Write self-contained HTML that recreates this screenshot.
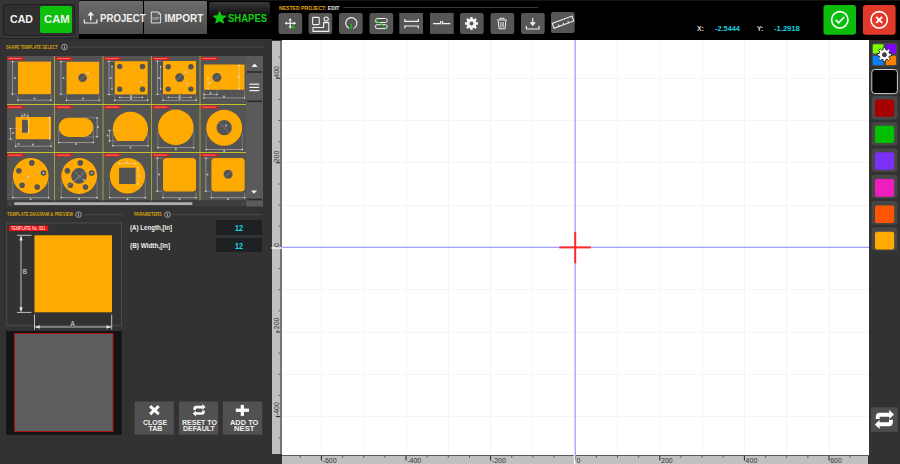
<!DOCTYPE html>
<html><head><meta charset="utf-8">
<style>
*{margin:0;padding:0;box-sizing:border-box}
html,body{width:900px;height:464px;overflow:hidden;background:#323232;font-family:"Liberation Sans",sans-serif}
.a{position:absolute}
.t{position:absolute;white-space:nowrap;font-weight:bold;transform-origin:0 0}
svg{position:absolute;overflow:visible}
</style></head><body>
<!-- ===== top left header ===== -->
<div class="a" style="left:0;top:0;width:79px;height:39px;background:#353535"></div>
<div class="a" style="left:79px;top:0;width:821px;height:40px;background:#000"></div>
<div class="a" style="left:79px;top:0;width:821px;height:1px;background:#151515"></div>
<div class="a" style="left:2.5px;top:3.5px;width:72.5px;height:32.5px;background:#2f2f2f;border:1.5px solid #1f1f1f;border-radius:3px;box-shadow:0 1px 0 #3c3c3c"></div>
<div class="a" style="left:0;top:38px;width:79px;height:1px;background:#232323"></div>
<div class="a" style="left:40px;top:6px;width:32px;height:27px;background:#0cc00c;border-radius:2px"></div>
<div class="t" id="cad" style="left:10px;top:13.8px;font-size:10px;color:#f2f2f2;transform:scaleX(1.06)">CAD</div>
<div class="t" id="cam" style="left:43.8px;top:13.8px;font-size:10px;color:#f2f2f2;transform:scaleX(1.13)">CAM</div>

<div class="a" style="left:79px;top:1px;width:64px;height:33px;background:linear-gradient(#6c6c6c,#4c4c4c);border-radius:1px 1px 0 0"></div>
<div class="a" style="left:144px;top:1px;width:63px;height:33px;background:linear-gradient(#6c6c6c,#4c4c4c);border-radius:1px 1px 0 0"></div>
<div class="a" style="left:209px;top:2px;width:61px;height:32px;background:linear-gradient(#383838,#000 60%);border-radius:2px 2px 0 0"></div>
<div class="t" id="proj" style="left:100px;top:13.3px;font-size:10px;color:#f0f0f0;transform:scaleX(0.965)">PROJECT</div>
<div class="t" id="imp" style="left:164.5px;top:13.3px;font-size:10px;color:#f0f0f0">IMPORT</div>
<div class="t" id="shp" style="left:227.5px;top:13.3px;font-size:10px;color:#10d010;transform:scaleX(0.95)">SHAPES</div>

<!-- ===== left panel ===== -->
<div class="a" style="left:0;top:39px;width:272px;height:425px;background:#323232"></div>


<!-- ===== left panel content ===== -->
<svg style="left:0;top:0" width="900" height="464" viewBox="0 0 900 464" font-family="Liberation Sans" font-weight="bold">
 <line x1="69.5" y1="47" x2="263" y2="47" stroke="#4a4a4a" stroke-width="1"/>
 <circle cx="64.5" cy="47" r="2.8" fill="none" stroke="#bdbdbd" stroke-width="0.8"/>
 <line x1="64.5" y1="45.5" x2="64.5" y2="48.7" stroke="#bdbdbd" stroke-width="0.8"/>
 <!-- grid -->
 <rect x="7" y="56" width="239" height="144.5" fill="#545454"/>
 <rect x="246" y="56" width="17" height="150.5" fill="#5a5a5a"/>
 <rect x="7" y="200.5" width="239" height="6" fill="#3d3d3d"/>
 <rect x="14" y="202.3" width="178.5" height="2.8" rx="1.4" fill="#b0b0b0"/>
 <path d="M10.5 202.2 L8.8 203.6 L10.5 205" fill="none" stroke="#777" stroke-width="0.6"/>
 <path d="M241.8 202.2 L243.5 203.6 L241.8 205" fill="none" stroke="#777" stroke-width="0.6"/>
 <g stroke="#a3a036" stroke-width="1">
  <line x1="54.5" y1="56" x2="54.5" y2="200.5"/>
  <line x1="103" y1="56" x2="103" y2="200.5"/>
  <line x1="151.5" y1="56" x2="151.5" y2="200.5"/>
  <line x1="200" y1="56" x2="200" y2="200.5"/>
 </g>
 <g stroke="#c2be2e" stroke-width="1">
  <line x1="7" y1="104.5" x2="246" y2="104.5"/>
  <line x1="7" y1="152.5" x2="246" y2="152.5"/>
 </g>
 <!-- scroll column -->
 <path d="M251.5 67 L254.6 63.6 L257.7 67 Z" fill="#f0f0f0"/>
 <rect x="247" y="71.2" width="15" height="1.6" fill="#2a2a2a"/>
 <g stroke="#f4f4f4" stroke-width="1.2"><line x1="249.4" y1="84.2" x2="259.2" y2="84.2"/><line x1="249.4" y1="87.4" x2="259.2" y2="87.4"/><line x1="249.4" y1="90.6" x2="259.2" y2="90.6"/></g>
 <rect x="247" y="100.5" width="15" height="1.6" fill="#2a2a2a"/>
 <path d="M250.9 190.4 L254 193.8 L257.1 190.4 Z" fill="#f0f0f0"/>
 <rect x="247" y="198.7" width="15" height="1.6" fill="#2a2a2a"/>
 <!-- red labels -->
 <g fill="#f41212"><rect x="7.0" y="57.3" width="16.8" height="2.6"/><rect x="55.5" y="57.3" width="16.8" height="2.6"/><rect x="104.0" y="57.3" width="16.8" height="2.6"/><rect x="152.5" y="57.3" width="16.8" height="2.6"/><rect x="201.0" y="57.3" width="16.8" height="2.6"/><rect x="7.0" y="105.8" width="16.8" height="2.6"/><rect x="55.5" y="105.8" width="16.8" height="2.6"/><rect x="104.0" y="105.8" width="16.8" height="2.6"/><rect x="152.5" y="105.8" width="16.8" height="2.6"/><rect x="201.0" y="105.8" width="16.8" height="2.6"/><rect x="7.0" y="153.8" width="16.8" height="2.6"/><rect x="55.5" y="153.8" width="16.8" height="2.6"/><rect x="104.0" y="153.8" width="16.8" height="2.6"/><rect x="152.5" y="153.8" width="16.8" height="2.6"/><rect x="201.0" y="153.8" width="16.8" height="2.6"/></g><g fill="#ffa8a8"><rect x="8.5" y="58.3" width="13" height="0.6"/><rect x="57.0" y="58.3" width="13" height="0.6"/><rect x="105.5" y="58.3" width="13" height="0.6"/><rect x="154.0" y="58.3" width="13" height="0.6"/><rect x="202.5" y="58.3" width="13" height="0.6"/><rect x="8.5" y="106.8" width="13" height="0.6"/><rect x="57.0" y="106.8" width="13" height="0.6"/><rect x="105.5" y="106.8" width="13" height="0.6"/><rect x="154.0" y="106.8" width="13" height="0.6"/><rect x="202.5" y="106.8" width="13" height="0.6"/><rect x="8.5" y="154.8" width="13" height="0.6"/><rect x="57.0" y="154.8" width="13" height="0.6"/><rect x="105.5" y="154.8" width="13" height="0.6"/><rect x="154.0" y="154.8" width="13" height="0.6"/><rect x="202.5" y="154.8" width="13" height="0.6"/></g>
 <!-- shapes -->
 <g fill="#ffaa00">
  <rect x="18" y="61.6" width="33" height="32.6"/>
  <path fill-rule="evenodd" d="M66.5 61.7 H99.2 V94.2 H66.5 Z M78.3 77.7 a4.3 4.3 0 1 0 8.6 0 a4.3 4.3 0 1 0 -8.6 0 Z"/>
  <path fill-rule="evenodd" d="M114.8 61.3 H147.7 V94.5 H114.8 Z M117 66.5 a2.7 2.7 0 1 0 5.4 0 a2.7 2.7 0 1 0 -5.4 0 Z M139.8 66.5 a2.7 2.7 0 1 0 5.4 0 a2.7 2.7 0 1 0 -5.4 0 Z M117 89.2 a2.7 2.7 0 1 0 5.4 0 a2.7 2.7 0 1 0 -5.4 0 Z M139.8 89.2 a2.7 2.7 0 1 0 5.4 0 a2.7 2.7 0 1 0 -5.4 0 Z"/>
  <path fill-rule="evenodd" d="M163 61.1 H196.1 V94.3 H163 Z M165.5 66.7 a2.7 2.7 0 1 0 5.4 0 a2.7 2.7 0 1 0 -5.4 0 Z M188.2 66.7 a2.7 2.7 0 1 0 5.4 0 a2.7 2.7 0 1 0 -5.4 0 Z M165.5 89.1 a2.7 2.7 0 1 0 5.4 0 a2.7 2.7 0 1 0 -5.4 0 Z M188.2 89.1 a2.7 2.7 0 1 0 5.4 0 a2.7 2.7 0 1 0 -5.4 0 Z M175.2 77.6 a4.4 4.4 0 1 0 8.8 0 a4.4 4.4 0 1 0 -8.8 0 Z"/>
  <path fill-rule="evenodd" d="M203.9 64.4 H244.5 V89.7 H203.9 Z M212.4 77.4 a4.5 4.5 0 1 0 9 0 a4.5 4.5 0 1 0 -9 0 Z"/>
  <path fill-rule="evenodd" d="M15.6 117.1 H51.1 V139.3 H15.6 Z M22 119.8 H27.9 V132.8 H22 Z"/>
  <rect x="58.7" y="117.7" width="34.7" height="19.2" rx="9.6"/>
  <path d="M117.3 141 A17.6 17.6 0 1 1 143.5 141 Z"/>
  <circle cx="175.8" cy="127.4" r="17.8"/>
  <path fill-rule="evenodd" d="M206.2 127.8 a18 18 0 1 0 36 0 a18 18 0 1 0 -36 0 Z M216.6 127.7 a7.6 7.6 0 1 0 15.2 0 a7.6 7.6 0 1 0 -15.2 0 Z"/>
  <path fill-rule="evenodd" d="M12.8 175.9 a17.9 17.9 0 1 0 35.8 0 a17.9 17.9 0 1 0 -35.8 0 Z M29 162.9 a2.8 2.8 0 1 0 5.6 0 a2.8 2.8 0 1 0 -5.6 0 Z M16.1 170.7 a2.8 2.8 0 1 0 5.6 0 a2.8 2.8 0 1 0 -5.6 0 Z M40.7 173 a2.8 2.8 0 1 0 5.6 0 a2.8 2.8 0 1 0 -5.6 0 Z M19.3 185.2 a2.8 2.8 0 1 0 5.6 0 a2.8 2.8 0 1 0 -5.6 0 Z M34.4 187.1 a2.8 2.8 0 1 0 5.6 0 a2.8 2.8 0 1 0 -5.6 0 Z"/>
  <path fill-rule="evenodd" d="M61.3 176 a17.9 17.9 0 1 0 35.8 0 a17.9 17.9 0 1 0 -35.8 0 Z M71.2 175.9 a7.8 7.8 0 1 0 15.6 0 a7.8 7.8 0 1 0 -15.6 0 Z M77.5 162.9 a2.8 2.8 0 1 0 5.6 0 a2.8 2.8 0 1 0 -5.6 0 Z M64.6 170.7 a2.8 2.8 0 1 0 5.6 0 a2.8 2.8 0 1 0 -5.6 0 Z M88.9 173 a2.8 2.8 0 1 0 5.6 0 a2.8 2.8 0 1 0 -5.6 0 Z M67.6 185.2 a2.8 2.8 0 1 0 5.6 0 a2.8 2.8 0 1 0 -5.6 0 Z M82.7 187.1 a2.8 2.8 0 1 0 5.6 0 a2.8 2.8 0 1 0 -5.6 0 Z"/>
  <path fill-rule="evenodd" d="M109.7 175.7 a17.8 17.8 0 1 0 35.6 0 a17.8 17.8 0 1 0 -35.6 0 Z M119.1 167.7 H135.6 V183.9 H119.1 Z"/>
  <rect x="163" y="158" width="33" height="33.4" rx="3.5"/>
  <path fill-rule="evenodd" d="M214.9 158 H241.2 a3.5 3.5 0 0 1 3.5 3.5 V187.9 a3.5 3.5 0 0 1 -3.5 3.5 H214.9 a3.5 3.5 0 0 1 -3.5 -3.5 V161.5 a3.5 3.5 0 0 1 3.5 -3.5 Z M223.6 174.3 a4.5 4.5 0 1 0 9 0 a4.5 4.5 0 1 0 -9 0 Z"/>
 </g>
 <!-- dimension lines (thumbnails) -->
 <g stroke="#f0f0f0" stroke-width="0.45" fill="none" opacity="0.9">
 <path d="M12.5 61.7 L12.5 94.1 M18 100.2 L51 100.2 M61 61.7 L61 94.2 M66.5 100.3 L99.2 100.3 M109 61.3 L109 94.5 M112 66.5 L112 89.2 M114.8 100.3 L147.7 100.3 M119.7 97.4 L142.5 97.4 M157.5 61.1 L157.5 94.3 M160.5 66.7 L160.5 89.1 M163 100.3 L196.1 100.3 M168.2 97.4 L190.9 97.4 M239.1 65.5 L239.1 88.8 M208 78 L208 88.5 M204 97.9 L244.5 97.9 M204 94.5 L217 94.5 M15.6 146.2 L51.1 146.2 M22 116 L27.9 116 M49.5 117.5 L49.5 139 M28.5 120 L28.5 132.5 M10.5 128.5 L10.5 139 M97.1 117.9 L97.1 136.7 M58.7 142.5 L93.4 142.5 M112.8 145.7 L148 145.7 M109.5 130.5 L109.5 141 M157.9 147.6 L193.7 147.6 M206.2 149.5 L242.3 149.5 M12.8 197.6 L48.6 197.6 M61.3 197.6 L97.1 197.6 M109.7 197.6 L145.3 197.6 M119.1 163.5 L135.6 163.5 M138.2 167.7 L138.2 183.9 M157.3 158.2 L157.3 191.2 M163 197.6 L196 197.6 M205.9 158.2 L205.9 191.2 M211.4 197.6 L244.7 197.6 "/>
 <path d="M10.5 61.7 L17 61.7 M10.5 94.1 L17 94.1 M18 95.5 L18 101.2 M51 95.5 L51 101.2 M59 61.7 L65.5 61.7 M59 94.2 L65.5 94.2 M66.5 95.5 L66.5 101.3 M99.2 95.5 L99.2 101.3 M82.6 68 L82.6 71 M82.6 84.5 L82.6 87.5 M73 77.7 L76 77.7 M89.5 77.7 L92.5 77.7 M80 80.5 L85.5 75 M86 74.5 L89 71.5 M107 61.3 L114 61.3 M107 94.5 L114 94.5 M114.8 95.5 L114.8 101.3 M147.7 95.5 L147.7 101.3 M155.5 61.1 L162 61.1 M155.5 94.3 L162 94.3 M163 95.5 L163 101.3 M196.1 95.5 L196.1 101.3 M176.5 80.5 L182.5 74.5 M183 74 L186 71 M179.6 68 L179.6 71 M179.6 84.5 L179.6 87.5 M204 91 L204 98.9 M244.5 91 L244.5 98.9 M214 80.5 L220 74.5 M220 74.5 L223 70.5 M217.1 89.7 L217.1 95.5 M15.6 140.5 L15.6 147.2 M51.1 140.5 L51.1 147.2 M8.5 128.5 L22 128.5 M8.5 139.3 L14 139.3 M22 112.5 L22 119 M27.9 112.5 L27.9 119 M84 117.8 L98.5 117.8 M84 136.9 L98.5 136.9 M58.7 128 L58.7 143.5 M93.4 128 L93.4 143.5 M112.8 134 L112.8 146.7 M148 134 L148 146.7 M107.5 130.5 L120 130.5 M107.5 141 L117 141 M124 128.3 L128 128.3 M133 128.3 L137 128.3 M130.5 121 L130.5 125 M130.5 131 L130.5 135 M157.9 131 L157.9 148.6 M193.7 131 L193.7 148.6 M206.2 133 L206.2 150.5 M242.3 133 L242.3 150.5 M219.2 122.5 L229.2 132.8 M12.8 181 L12.8 198.6 M48.6 181 L48.6 198.6 M20.5 181.5 L42.5 170.5 M61.3 181 L61.3 198.6 M97.1 181 L97.1 198.6 M73.7 170.3 L84.6 181.5 M84.6 170.3 L73.7 181.5 M68 186 L91.5 168 M109.7 181 L109.7 198.6 M145.3 181 L145.3 198.6 M155.3 158.2 L163 158.2 M155.3 191.2 L163 191.2 M163 192.5 L163 198.6 M196 192.5 L196 198.6 M203.9 158.2 L211.5 158.2 M203.9 191.2 L211.5 191.2 M211.4 192.5 L211.4 198.6 M244.7 192.5 L244.7 198.6 M228.1 167 L228.1 170 M228.1 178.5 L228.1 181.5 M218 174.3 L221 174.3 M235 174.3 L238 174.3 M225.5 177 L231 171.5 " stroke="#cfcfcf" stroke-width="0.35"/>
 </g><g fill="#f4f4f4">
 <rect x="11.9" y="61.1" width="1.2" height="1.2"/><rect x="11.9" y="93.5" width="1.2" height="1.2"/>
 <rect x="17.4" y="99.6" width="1.2" height="1.2"/><rect x="50.4" y="99.6" width="1.2" height="1.2"/>
 <rect x="60.4" y="61.1" width="1.2" height="1.2"/><rect x="60.4" y="93.6" width="1.2" height="1.2"/>
 <rect x="65.9" y="99.7" width="1.2" height="1.2"/><rect x="98.6" y="99.7" width="1.2" height="1.2"/>
 <rect x="108.4" y="60.7" width="1.2" height="1.2"/><rect x="108.4" y="93.9" width="1.2" height="1.2"/>
 <rect x="111.4" y="65.9" width="1.2" height="1.2"/><rect x="111.4" y="88.6" width="1.2" height="1.2"/>
 <rect x="114.2" y="99.7" width="1.2" height="1.2"/><rect x="147.1" y="99.7" width="1.2" height="1.2"/>
 <rect x="119.1" y="96.8" width="1.2" height="1.2"/><rect x="141.9" y="96.8" width="1.2" height="1.2"/>
 <rect x="156.9" y="60.5" width="1.2" height="1.2"/><rect x="156.9" y="93.7" width="1.2" height="1.2"/>
 <rect x="159.9" y="66.1" width="1.2" height="1.2"/><rect x="159.9" y="88.5" width="1.2" height="1.2"/>
 <rect x="162.4" y="99.7" width="1.2" height="1.2"/><rect x="195.5" y="99.7" width="1.2" height="1.2"/>
 <rect x="167.6" y="96.8" width="1.2" height="1.2"/><rect x="190.3" y="96.8" width="1.2" height="1.2"/>
 <rect x="238.5" y="64.9" width="1.2" height="1.2"/><rect x="238.5" y="88.2" width="1.2" height="1.2"/>
 <rect x="207.4" y="77.4" width="1.2" height="1.2"/><rect x="207.4" y="87.9" width="1.2" height="1.2"/>
 <rect x="203.4" y="97.3" width="1.2" height="1.2"/><rect x="243.9" y="97.3" width="1.2" height="1.2"/>
 <rect x="203.4" y="93.9" width="1.2" height="1.2"/><rect x="216.4" y="93.9" width="1.2" height="1.2"/>
 <rect x="15.0" y="145.6" width="1.2" height="1.2"/><rect x="50.5" y="145.6" width="1.2" height="1.2"/>
 <rect x="21.4" y="115.4" width="1.2" height="1.2"/><rect x="27.3" y="115.4" width="1.2" height="1.2"/>
 <rect x="48.9" y="116.9" width="1.2" height="1.2"/><rect x="48.9" y="138.4" width="1.2" height="1.2"/>
 <rect x="27.9" y="119.4" width="1.2" height="1.2"/><rect x="27.9" y="131.9" width="1.2" height="1.2"/>
 <rect x="9.9" y="127.9" width="1.2" height="1.2"/><rect x="9.9" y="138.4" width="1.2" height="1.2"/>
 <rect x="96.5" y="117.3" width="1.2" height="1.2"/><rect x="96.5" y="136.1" width="1.2" height="1.2"/>
 <rect x="58.1" y="141.9" width="1.2" height="1.2"/><rect x="92.8" y="141.9" width="1.2" height="1.2"/>
 <rect x="112.2" y="145.1" width="1.2" height="1.2"/><rect x="147.4" y="145.1" width="1.2" height="1.2"/>
 <rect x="108.9" y="129.9" width="1.2" height="1.2"/><rect x="108.9" y="140.4" width="1.2" height="1.2"/>
 <rect x="157.3" y="147.0" width="1.2" height="1.2"/><rect x="193.1" y="147.0" width="1.2" height="1.2"/>
 <rect x="205.6" y="148.9" width="1.2" height="1.2"/><rect x="241.7" y="148.9" width="1.2" height="1.2"/>
 <rect x="12.2" y="197.0" width="1.2" height="1.2"/><rect x="48.0" y="197.0" width="1.2" height="1.2"/>
 <rect x="60.7" y="197.0" width="1.2" height="1.2"/><rect x="96.5" y="197.0" width="1.2" height="1.2"/>
 <rect x="109.1" y="197.0" width="1.2" height="1.2"/><rect x="144.7" y="197.0" width="1.2" height="1.2"/>
 <rect x="118.5" y="162.9" width="1.2" height="1.2"/><rect x="135.0" y="162.9" width="1.2" height="1.2"/>
 <rect x="137.6" y="167.1" width="1.2" height="1.2"/><rect x="137.6" y="183.3" width="1.2" height="1.2"/>
 <rect x="156.7" y="157.6" width="1.2" height="1.2"/><rect x="156.7" y="190.6" width="1.2" height="1.2"/>
 <rect x="162.4" y="197.0" width="1.2" height="1.2"/><rect x="195.4" y="197.0" width="1.2" height="1.2"/>
 <rect x="205.3" y="157.6" width="1.2" height="1.2"/><rect x="205.3" y="190.6" width="1.2" height="1.2"/>
 <rect x="210.8" y="197.0" width="1.2" height="1.2"/><rect x="244.1" y="197.0" width="1.2" height="1.2"/>
 </g><g fill="#dcdcdc">
 <rect x="14.2" y="77.1" width="1.6" height="1.8" opacity="0.8"/>
 <rect x="33.7" y="97.6" width="1.6" height="1.8" opacity="0.8"/>
 <rect x="62.7" y="77.1" width="1.6" height="1.8" opacity="0.8"/>
 <rect x="82.2" y="97.6" width="1.6" height="1.8" opacity="0.8"/>
 <rect x="87.2" y="72.1" width="1.6" height="1.8" opacity="0.8"/>
 <rect x="109.7" y="77.1" width="1.6" height="1.8" opacity="0.8"/>
 <rect x="130.2" y="95.1" width="1.6" height="1.8" opacity="0.8"/>
 <rect x="130.2" y="97.9" width="1.6" height="1.8" opacity="0.8"/>
 <rect x="140.2" y="81.1" width="1.6" height="1.8" opacity="0.8"/>
 <rect x="158.2" y="77.1" width="1.6" height="1.8" opacity="0.8"/>
 <rect x="178.8" y="95.1" width="1.6" height="1.8" opacity="0.8"/>
 <rect x="178.8" y="97.9" width="1.6" height="1.8" opacity="0.8"/>
 <rect x="185.2" y="71.1" width="1.6" height="1.8" opacity="0.8"/>
 <rect x="186.2" y="83.1" width="1.6" height="1.8" opacity="0.8"/>
 <rect x="238.3" y="76.1" width="1.6" height="1.8" opacity="0.8"/>
 <rect x="209.2" y="82.1" width="1.6" height="1.8" opacity="0.8"/>
 <rect x="223.2" y="95.6" width="1.6" height="1.8" opacity="0.8"/>
 <rect x="209.7" y="92.1" width="1.6" height="1.8" opacity="0.8"/>
 <rect x="32.2" y="143.7" width="1.6" height="1.8" opacity="0.8"/>
 <rect x="23.7" y="113.6" width="1.6" height="1.8" opacity="0.8"/>
 <rect x="12.2" y="132.1" width="1.6" height="1.8" opacity="0.8"/>
 <rect x="17.7" y="143.1" width="1.6" height="1.8" opacity="0.8"/>
 <rect x="97.2" y="126.1" width="1.6" height="1.8" opacity="0.8"/>
 <rect x="75.2" y="143.1" width="1.6" height="1.8" opacity="0.8"/>
 <rect x="129.7" y="146.6" width="1.6" height="1.8" opacity="0.8"/>
 <rect x="106.7" y="134.6" width="1.6" height="1.8" opacity="0.8"/>
 <rect x="175.0" y="148.4" width="1.6" height="1.8" opacity="0.8"/>
 <rect x="223.4" y="150.1" width="1.6" height="1.8" opacity="0.8"/>
 <rect x="225.2" y="124.6" width="1.6" height="1.8" opacity="0.8"/>
 <rect x="29.9" y="198.3" width="1.6" height="1.8" opacity="0.8"/>
 <rect x="27.2" y="176.1" width="1.6" height="1.8" opacity="0.8"/>
 <rect x="42.7" y="172.1" width="1.6" height="1.8" opacity="0.8"/>
 <rect x="78.4" y="198.3" width="1.6" height="1.8" opacity="0.8"/>
 <rect x="83.2" y="179.1" width="1.6" height="1.8" opacity="0.8"/>
 <rect x="90.9" y="172.1" width="1.6" height="1.8" opacity="0.8"/>
 <rect x="126.7" y="198.3" width="1.6" height="1.8" opacity="0.8"/>
 <rect x="126.7" y="161.1" width="1.6" height="1.8" opacity="0.8"/>
 <rect x="138.7" y="175.1" width="1.6" height="1.8" opacity="0.8"/>
 <rect x="158.2" y="173.6" width="1.6" height="1.8" opacity="0.8"/>
 <rect x="178.7" y="198.3" width="1.6" height="1.8" opacity="0.8"/>
 <rect x="206.7" y="173.6" width="1.6" height="1.8" opacity="0.8"/>
 <rect x="227.2" y="198.3" width="1.6" height="1.8" opacity="0.8"/>
 </g>
 <!-- section headers -->
 <line x1="84" y1="214.6" x2="122" y2="214.6" stroke="#4a4a4a" stroke-width="1"/>
 <circle cx="78.5" cy="214.6" r="2.8" fill="none" stroke="#bdbdbd" stroke-width="0.8"/>
 <line x1="78.5" y1="213.1" x2="78.5" y2="216.3" stroke="#bdbdbd" stroke-width="0.8"/>
 <line x1="172.5" y1="214.6" x2="262" y2="214.6" stroke="#4a4a4a" stroke-width="1"/>
 <circle cx="167.5" cy="214.6" r="2.8" fill="none" stroke="#bdbdbd" stroke-width="0.8"/>
 <line x1="167.5" y1="213.1" x2="167.5" y2="216.3" stroke="#bdbdbd" stroke-width="0.8"/>

 <!-- preview diagram -->
 <rect x="6.7" y="222.9" width="114.8" height="102.8" fill="none" stroke="#4b4b4b" stroke-width="1"/>
 <rect x="9" y="225.5" width="39.2" height="5.5" fill="#ee1111"/>
 <rect x="34.5" y="235.3" width="77.5" height="77" fill="#ffaa00"/>
 <g stroke="#e6e6e6" stroke-width="0.8" fill="none">
  <path d="M21 236.5 V311.2 M17 235.3 H31.5 M17 312.4 H31.5"/>
  <path d="M35.5 327 H111 M34.5 314.5 V329.6 M111.7 314.5 V329.6"/>
 </g>
 <g fill="#e6e6e6">
  <path d="M21 235.6 L19.3 240.5 L22.7 240.5 Z M21 312.2 L19.3 307.3 L22.7 307.3 Z"/>
  <path d="M34.8 327 L39.7 325.3 L39.7 328.7 Z M111.4 327 L106.5 325.3 L106.5 328.7 Z"/>
 </g>
 <!-- preview black -->
 <rect x="6.2" y="331" width="115.4" height="103.8" fill="#141414"/>
 <rect x="14.5" y="333.5" width="98.5" height="98" fill="#5d5d5d" stroke="#a81414" stroke-width="1"/>

 <!-- buttons -->
 <rect x="134.6" y="401.5" width="39.2" height="33.1" fill="#515151"/>
 <rect x="179" y="401.5" width="39.2" height="33.1" fill="#515151"/>
 <rect x="222.8" y="401.5" width="39.4" height="33.1" fill="#515151"/>
</svg>


<!-- ===== left panel texts ===== -->
<div class="t" id="sts" style="left:6px;top:43.5px;font-size:5.5px;color:#d6a10c;transform:scaleX(0.708)">SHAPE TEMPLATE SELECT</div>
<div class="t" id="tdp" style="left:6.6px;top:211px;font-size:5.5px;color:#d6a10c;transform:scaleX(0.74)">TEMPLATE DIAGRAM &amp; PREVIEW</div>
<div class="t" id="par" style="left:133.7px;top:211px;font-size:5.5px;color:#d6a10c;transform:scaleX(0.725)">PARAMETERS</div>
<div class="t" id="tno" style="left:11px;top:226px;font-size:4.5px;color:#fff;font-weight:normal;transform:scaleX(0.85)">TEMPLATE No. 001</div>
<div class="t" id="lenA" style="left:130px;top:224px;font-size:7px;color:#f0f0f0;transform:scaleX(0.88)">(A) Length,[in]</div>
<div class="t" id="widB" style="left:130px;top:242px;font-size:7px;color:#f0f0f0;transform:scaleX(0.915)">(B) Width,[in]</div>
<div class="a" style="left:216.3px;top:220.3px;width:45.7px;height:14.4px;background:#1e2123"></div>
<div class="a" style="left:216.3px;top:238.3px;width:45.7px;height:14.2px;background:#1e2123"></div>
<div class="t" id="v1" style="left:235.3px;top:223px;font-size:8.5px;color:#1cd6e4;transform:scaleX(0.85)">12</div>
<div class="t" id="v2" style="left:235.3px;top:241px;font-size:8.5px;color:#1cd6e4;transform:scaleX(0.85)">12</div>
<div class="t" style="left:70.6px;top:319.8px;font-size:6.3px;color:#e0e0e0;font-weight:normal">A</div>
<div class="t" style="left:22.8px;top:268.3px;font-size:6.3px;color:#e0e0e0;font-weight:normal">B</div>
<div class="t" id="b1a" style="left:143px;top:419px;font-size:7px;color:#f2f2f2">CLOSE</div>
<div class="t" id="b1b" style="left:148.5px;top:425px;font-size:7px;color:#f2f2f2">TAB</div>
<div class="t" id="b2a" style="left:182px;top:419px;font-size:7px;color:#f2f2f2">RESET TO</div>
<div class="t" id="b2b" style="left:183px;top:425px;font-size:7px;color:#f2f2f2">DEFAULT</div>
<div class="t" id="b3a" style="left:229.6px;top:419px;font-size:7px;color:#f2f2f2;transform:scaleX(1.06)">ADD TO</div>
<div class="t" id="b3b" style="left:233.5px;top:425px;font-size:7px;color:#f2f2f2;transform:scaleX(1.1)">NEST</div>


<!-- ===== canvas ===== -->
<div class="a" style="left:272px;top:41px;width:8px;height:413.4px;background:#c0c0c0"></div>
<div class="a" style="left:280px;top:41px;width:2px;height:413.4px;background:#747474"></div>
<div class="a" style="left:282px;top:455px;width:587px;height:1px;background:#5a5a5a"></div>
<div class="a" style="left:282px;top:456px;width:586px;height:8px;background:#c0c0c0"></div>
<div class="a" style="left:282px;top:40px;width:587px;height:415px;background:#fff"></div>
<svg style="left:0;top:0" width="900" height="464" viewBox="0 0 900 464" font-family="Liberation Sans">
 <g stroke="#f5f5f5" stroke-width="1"><line x1="321.5" y1="40" x2="321.5" y2="455"/><line x1="363.5" y1="40" x2="363.5" y2="455"/><line x1="406.5" y1="40" x2="406.5" y2="455"/><line x1="448.5" y1="40" x2="448.5" y2="455"/><line x1="490.5" y1="40" x2="490.5" y2="455"/><line x1="532.5" y1="40" x2="532.5" y2="455"/><line x1="617.5" y1="40" x2="617.5" y2="455"/><line x1="659.5" y1="40" x2="659.5" y2="455"/><line x1="702.5" y1="40" x2="702.5" y2="455"/><line x1="744.5" y1="40" x2="744.5" y2="455"/><line x1="786.5" y1="40" x2="786.5" y2="455"/><line x1="829.5" y1="40" x2="829.5" y2="455"/><line x1="282" y1="78.5" x2="869" y2="78.5"/><line x1="282" y1="120.5" x2="869" y2="120.5"/><line x1="282" y1="162.5" x2="869" y2="162.5"/><line x1="282" y1="205.5" x2="869" y2="205.5"/><line x1="282" y1="289.5" x2="869" y2="289.5"/><line x1="282" y1="332.5" x2="869" y2="332.5"/><line x1="282" y1="374.5" x2="869" y2="374.5"/><line x1="282" y1="416.5" x2="869" y2="416.5"/></g>
 <line x1="575.2" y1="40" x2="575.2" y2="455" stroke="#a0a0ff" stroke-width="1.3"/>
 <line x1="282" y1="247.4" x2="869" y2="247.4" stroke="#a0a0ff" stroke-width="1.3"/>
 <line x1="559.3" y1="247.4" x2="590.8" y2="247.4" stroke="#ff2a2a" stroke-width="2"/>
 <line x1="575.2" y1="231.9" x2="575.2" y2="263.3" stroke="#ff2a2a" stroke-width="2"/>
 <line x1="278.5" y1="57.1" x2="280" y2="57.1" stroke="#444" stroke-width="0.8"/><line x1="276" y1="78.2" x2="280" y2="78.2" stroke="#222" stroke-width="1"/><line x1="278.5" y1="99.4" x2="280" y2="99.4" stroke="#444" stroke-width="0.8"/><line x1="278.5" y1="120.5" x2="280" y2="120.5" stroke="#444" stroke-width="0.8"/><line x1="278.5" y1="141.7" x2="280" y2="141.7" stroke="#444" stroke-width="0.8"/><line x1="276" y1="162.8" x2="280" y2="162.8" stroke="#222" stroke-width="1"/><line x1="278.5" y1="184.0" x2="280" y2="184.0" stroke="#444" stroke-width="0.8"/><line x1="278.5" y1="205.1" x2="280" y2="205.1" stroke="#444" stroke-width="0.8"/><line x1="278.5" y1="226.2" x2="280" y2="226.2" stroke="#444" stroke-width="0.8"/><line x1="276" y1="247.4" x2="280" y2="247.4" stroke="#222" stroke-width="1"/><line x1="278.5" y1="268.6" x2="280" y2="268.6" stroke="#444" stroke-width="0.8"/><line x1="278.5" y1="289.7" x2="280" y2="289.7" stroke="#444" stroke-width="0.8"/><line x1="278.5" y1="310.9" x2="280" y2="310.9" stroke="#444" stroke-width="0.8"/><line x1="276" y1="332.0" x2="280" y2="332.0" stroke="#222" stroke-width="1"/><line x1="278.5" y1="353.1" x2="280" y2="353.1" stroke="#444" stroke-width="0.8"/><line x1="278.5" y1="374.3" x2="280" y2="374.3" stroke="#444" stroke-width="0.8"/><line x1="278.5" y1="395.4" x2="280" y2="395.4" stroke="#444" stroke-width="0.8"/><line x1="276" y1="416.6" x2="280" y2="416.6" stroke="#222" stroke-width="1"/><line x1="278.5" y1="437.8" x2="280" y2="437.8" stroke="#444" stroke-width="0.8"/>
 <line x1="300.3" y1="456" x2="300.3" y2="457.8" stroke="#444" stroke-width="0.8"/><line x1="321.4" y1="456" x2="321.4" y2="460.5" stroke="#222" stroke-width="1"/><line x1="342.6" y1="456" x2="342.6" y2="457.8" stroke="#444" stroke-width="0.8"/><line x1="363.7" y1="456" x2="363.7" y2="457.8" stroke="#444" stroke-width="0.8"/><line x1="384.9" y1="456" x2="384.9" y2="457.8" stroke="#444" stroke-width="0.8"/><line x1="406.0" y1="456" x2="406.0" y2="460.5" stroke="#222" stroke-width="1"/><line x1="427.2" y1="456" x2="427.2" y2="457.8" stroke="#444" stroke-width="0.8"/><line x1="448.3" y1="456" x2="448.3" y2="457.8" stroke="#444" stroke-width="0.8"/><line x1="469.5" y1="456" x2="469.5" y2="457.8" stroke="#444" stroke-width="0.8"/><line x1="490.6" y1="456" x2="490.6" y2="460.5" stroke="#222" stroke-width="1"/><line x1="511.8" y1="456" x2="511.8" y2="457.8" stroke="#444" stroke-width="0.8"/><line x1="532.9" y1="456" x2="532.9" y2="457.8" stroke="#444" stroke-width="0.8"/><line x1="554.1" y1="456" x2="554.1" y2="457.8" stroke="#444" stroke-width="0.8"/><line x1="575.2" y1="456" x2="575.2" y2="460.5" stroke="#222" stroke-width="1"/><line x1="596.4" y1="456" x2="596.4" y2="457.8" stroke="#444" stroke-width="0.8"/><line x1="617.5" y1="456" x2="617.5" y2="457.8" stroke="#444" stroke-width="0.8"/><line x1="638.7" y1="456" x2="638.7" y2="457.8" stroke="#444" stroke-width="0.8"/><line x1="659.8" y1="456" x2="659.8" y2="460.5" stroke="#222" stroke-width="1"/><line x1="681.0" y1="456" x2="681.0" y2="457.8" stroke="#444" stroke-width="0.8"/><line x1="702.1" y1="456" x2="702.1" y2="457.8" stroke="#444" stroke-width="0.8"/><line x1="723.2" y1="456" x2="723.2" y2="457.8" stroke="#444" stroke-width="0.8"/><line x1="744.4" y1="456" x2="744.4" y2="460.5" stroke="#222" stroke-width="1"/><line x1="765.6" y1="456" x2="765.6" y2="457.8" stroke="#444" stroke-width="0.8"/><line x1="786.7" y1="456" x2="786.7" y2="457.8" stroke="#444" stroke-width="0.8"/><line x1="807.9" y1="456" x2="807.9" y2="457.8" stroke="#444" stroke-width="0.8"/><line x1="829.0" y1="456" x2="829.0" y2="460.5" stroke="#222" stroke-width="1"/><line x1="850.2" y1="456" x2="850.2" y2="457.8" stroke="#444" stroke-width="0.8"/>
 <rect x="271.5" y="247.2" width="10.5" height="1.6" fill="#f4f4f4"/>
 <rect x="573.8" y="455" width="1.6" height="9" fill="#f4f4f4"/>
 <text x="322.6" y="462.7" font-size="7" fill="#333">-600</text><text x="407.2" y="462.7" font-size="7" fill="#333">-400</text><text x="491.8" y="462.7" font-size="7" fill="#333">-200</text><text x="576.4" y="462.7" font-size="7" fill="#333">0</text><text x="661.0" y="462.7" font-size="7" fill="#333">200</text><text x="745.6" y="462.7" font-size="7" fill="#333">400</text><text x="830.2" y="462.7" font-size="7" fill="#333">600</text><text transform="translate(278.8 77.7) rotate(-90)" font-size="7" fill="#333">400</text><text transform="translate(278.8 162.3) rotate(-90)" font-size="7" fill="#333">200</text><text transform="translate(278.8 246.9) rotate(-90)" font-size="7" fill="#333">0</text><text transform="translate(278.8 331.5) rotate(-90)" font-size="7" fill="#333">-200</text><text transform="translate(278.8 416.1) rotate(-90)" font-size="7" fill="#333">-400</text>
</svg>

<!-- ===== right column ===== -->
<div class="a" style="left:869px;top:40px;width:31px;height:424px;background:#323232"></div>


<!-- ===== toolbar ===== -->
<svg style="left:0;top:0" width="900" height="464" viewBox="0 0 900 464" font-family="Liberation Sans">
 <line x1="343.3" y1="7.5" x2="538" y2="7.5" stroke="#3a3a3a" stroke-width="1"/>
 <rect x="278.5" y="12.9" width="23.7" height="21" rx="2.2" fill="#565656"/><rect x="308.5" y="12.9" width="23.7" height="21" rx="2.2" fill="#565656"/><rect x="339" y="12.9" width="23.7" height="21" rx="2.2" fill="#565656"/><rect x="369.5" y="12.9" width="23.7" height="21" rx="2.2" fill="#565656"/><rect x="399.3" y="12.9" width="23.7" height="21" rx="0" fill="#565656"/><rect x="430" y="12.9" width="23.7" height="21" rx="0" fill="#565656"/><rect x="460" y="12.9" width="23.7" height="21" rx="2.2" fill="#565656"/><rect x="490.5" y="12.9" width="23.7" height="21" rx="2.2" fill="#565656"/><rect x="521" y="12.9" width="23.7" height="21" rx="2.2" fill="#565656"/><rect x="551" y="11.9" width="23.7" height="21" rx="2.2" fill="#565656"/>
 <!-- icon 1 move -->
 <g fill="#f2f2f2">
  <rect x="285.5" y="22.7" width="10" height="1.2"/>
  <rect x="289.6" y="18.8" width="1.2" height="9.5"/>
  <path d="M284.6 23.3 L287 21.6 L287 25 Z M296 23.3 L293.6 21.6 L293.6 25 Z M290.2 18.3 L288.5 20.6 L291.9 20.6 Z M290.2 28.5 L288.5 26.2 L291.9 26.2 Z"/>
 </g>
 <path d="M291.5 25 L295.8 27.6 L292.3 29 Z" fill="#10c010"/>
 <!-- icon 2 -->
 <g fill="none" stroke="#f2f2f2" stroke-width="1.1">
  <rect x="312.6" y="17.4" width="6.6" height="7.2" rx="0.8"/>
  <path d="M313 27.5 H323.6 V22.6 H328.8 V31.4 H313 Z" stroke-linejoin="round"/>
  <circle cx="326.2" cy="19.1" r="2.1"/>
 </g>
 <!-- icon 3 -->
 <path d="M349 28.3 A5.6 5.6 0 1 1 353.5 28.4" fill="none" stroke="#f2f2f2" stroke-width="1.1"/>
 <path d="M351.3 23.4 V27 Q351.3 28.4 349.8 28.5" fill="none" stroke="#10c010" stroke-width="1.5"/>
 <!-- icon 4 -->
 <g fill="none" stroke="#f2f2f2" stroke-width="1">
  <rect x="375.3" y="18.5" width="12" height="4" rx="2"/>
  <rect x="375.3" y="24.6" width="12" height="4" rx="2"/>
 </g>
 <path d="M375.5 19.5 L385.7 28.2" stroke="#10c010" stroke-width="1.1"/>
 <!-- icon 5 -->
 <path d="M404.8 19 V21.3 H418.3 V19 M404.8 28.3 V26 H418.3 V28.3" fill="none" stroke="#f2f2f2" stroke-width="1.2"/>
 <!-- icon 6 -->
 <path d="M433 23.6 H440.6 V21 M450.3 23.6 H442.5 V21" fill="none" stroke="#f2f2f2" stroke-width="1.2"/>
 <!-- icon 7 gear -->
 <g transform="translate(471.5 23.5)">
  <path fill="#f6f6f6" fill-rule="evenodd" d="M4.75 -1.22 L6.50 -1.13 L6.50 1.13 L4.75 1.22 L4.22 2.49 L5.40 3.80 L3.80 5.40 L2.49 4.22 L1.22 4.75 L1.13 6.50 L-1.13 6.50 L-1.22 4.75 L-2.49 4.22 L-3.80 5.40 L-5.40 3.80 L-4.22 2.49 L-4.75 1.22 L-6.50 1.13 L-6.50 -1.13 L-4.75 -1.22 L-4.22 -2.49 L-5.40 -3.80 L-3.80 -5.40 L-2.49 -4.22 L-1.22 -4.75 L-1.13 -6.50 L1.13 -6.50 L1.22 -4.75 L2.49 -4.22 L3.80 -5.40 L5.40 -3.80 L4.22 -2.49 Z M2.00 0 A2.00 2.00 0 1 0 -2.00 0 A2.00 2.00 0 1 0 2.00 0 Z"/>
 </g>
 <!-- icon 8 trash -->
 <g fill="none" stroke="#f2f2f2" stroke-width="1">
  <path d="M497 20 H507"/>
  <path d="M500 19.8 V18.3 H504 V19.8"/>
  <path d="M498.2 21 L499 28.8 H505 L505.8 21"/>
  <path d="M500.6 22 V27.6 M502 22 V27.6 M503.4 22 V27.6" stroke-width="0.7"/>
 </g>
 <!-- icon 9 download -->
 <path d="M526.4 26 V28.4 Q526.4 29 527 29 H538.4 Q539 29 539 28.4 V26" fill="none" stroke="#f2f2f2" stroke-width="1.2"/>
 <rect x="532.1" y="18" width="1.3" height="5"/>
 <path d="M529.7 22.2 L535.8 22.2 L532.75 26.3 Z" fill="#f2f2f2"/>
 <rect x="532.1" y="18" width="1.3" height="5" fill="#f2f2f2"/>
 <!-- icon 10 ruler -->
 <g transform="translate(563 22.2) rotate(-20)">
  <rect x="-10.5" y="-2.6" width="21" height="5.2" fill="none" stroke="#f2f2f2" stroke-width="1"/>
  <path d="M-5 2.6 V0.6 M0 2.6 V0.6 M5 2.6 V0.6" stroke="#f2f2f2" stroke-width="0.9"/>
 </g>
 <!-- check / close -->
 <rect x="823.5" y="4.9" width="32.5" height="29.8" rx="3" fill="#0cbc0c"/>
 <rect x="862.9" y="4.9" width="32.7" height="29.8" rx="3" fill="#e23a2a"/>
 <circle cx="839.8" cy="19.8" r="8.2" fill="none" stroke="#fff" stroke-width="1.6"/>
 <path d="M835.6 19.9 L838.6 22.9 L844.2 17" fill="none" stroke="#fff" stroke-width="1.7"/>
 <circle cx="879.2" cy="19.8" r="8.2" fill="none" stroke="#fff" stroke-width="1.6"/>
 <path d="M876.2 16.8 L882.2 22.8 M882.2 16.8 L876.2 22.8" fill="none" stroke="#fff" stroke-width="1.9"/>
 <!-- right palette -->
 <rect x="871.8" y="42.9" width="25.9" height="23.6" rx="3" fill="#474747"/>
 <rect x="872.8" y="44.2" width="10.7" height="9.4" rx="1.2" fill="#7cfc00"/>
 <rect x="885.7" y="44.2" width="10.3" height="9.4" rx="1.2" fill="#8000ff"/>
 <rect x="872.8" y="55.8" width="10.7" height="9.1" rx="1.2" fill="#0a80ff"/>
 <rect x="885.7" y="55.8" width="10.3" height="9.1" rx="1.2" fill="#ff8000"/>
 <rect x="871.8" y="69.5" width="25.6" height="24.1" rx="3" fill="#000" stroke="#cfcfcf" stroke-width="1"/>
 <g fill="#474747">
  <rect x="871.6" y="96" width="25.8" height="23.4" rx="3"/>
  <rect x="871.6" y="122.2" width="25.8" height="23.4" rx="3"/>
  <rect x="871.6" y="148.4" width="25.8" height="23.4" rx="3"/>
  <rect x="871.6" y="174.8" width="25.8" height="23.4" rx="3"/>
  <rect x="871.6" y="201" width="25.8" height="23.4" rx="3"/>
  <rect x="871.6" y="227.2" width="25.8" height="23.4" rx="3"/>
 </g>
 <rect x="875" y="99.6" width="19.2" height="17.2" rx="2" fill="#a60000"/>
 <rect x="875" y="125.8" width="19.2" height="17.2" rx="2" fill="#00c000"/>
 <rect x="875" y="152.2" width="19.2" height="17.6" rx="2" fill="#7b2ff7"/>
 <rect x="875" y="179" width="19.2" height="17.8" rx="2" fill="#ee1ebe"/>
 <rect x="875" y="205.4" width="19.2" height="17.6" rx="2" fill="#ff5500"/>
 <rect x="875" y="231.8" width="19.2" height="17.8" rx="2" fill="#ffaa00"/>
 <rect x="870.9" y="407.3" width="26.7" height="24.6" fill="#4d4d4d"/>
</svg>
<div class="t" id="npr" style="left:279px;top:4px;font-size:6.2px;color:#e6a50c;transform:scaleX(0.825)">NESTED PROJECT: <span style="color:#e8e8e8">EDIT</span></div>
<div class="t" id="xl" style="left:697px;top:24.5px;font-size:6.8px;color:#dcdcdc">X:</div>
<div class="t" id="xv" style="left:715px;top:24.5px;font-size:6.8px;color:#1ad2e2;transform:scaleX(1.08)">-2.5444</div>
<div class="t" id="yl" style="left:757px;top:24.5px;font-size:6.8px;color:#dcdcdc">Y:</div>
<div class="t" id="yv" style="left:774px;top:24.5px;font-size:6.8px;color:#1ad2e2;transform:scaleX(1.12)">-1.2918</div>


<svg style="left:0;top:0" width="900" height="464" viewBox="0 0 900 464">
 <!-- palette gear -->
 <g transform="translate(884.4 54.7)">
  <path fill="#fff" stroke="#222" stroke-width="0.9" fill-rule="evenodd" d="M5.04 -1.29 L7.09 -1.24 L7.09 1.24 L5.04 1.29 L4.48 2.65 L5.89 4.14 L4.14 5.89 L2.65 4.48 L1.29 5.04 L1.24 7.09 L-1.24 7.09 L-1.29 5.04 L-2.65 4.48 L-4.14 5.89 L-5.89 4.14 L-4.48 2.65 L-5.04 1.29 L-7.09 1.24 L-7.09 -1.24 L-5.04 -1.29 L-4.48 -2.65 L-5.89 -4.14 L-4.14 -5.89 L-2.65 -4.48 L-1.29 -5.04 L-1.24 -7.09 L1.24 -7.09 L1.29 -5.04 L2.65 -4.48 L4.14 -5.89 L5.89 -4.14 L4.48 -2.65 Z M2.00 0 A2.00 2.00 0 1 0 -2.00 0 A2.00 2.00 0 1 0 2.00 0 Z"/>
 </g>
 <!-- swap icon -->
 <g transform="translate(874.8 409.9) scale(1.5)">
  <g fill="none" stroke="#fff" stroke-width="2.6">
   <path d="M1.95 6.0 V4.7 Q1.95 3.2 3.45 3.2 H10"/>
   <path d="M10.75 6.6 V8.1 Q10.75 9.6 9.25 9.6 H2.8"/>
  </g>
  <path d="M9.6 0.1 L12.8 3.1 L9.6 6.1 Z M3.2 6.7 L0 9.7 L3.2 12.7 Z" fill="#fff"/>
 </g>
 <!-- header icons -->
 <g fill="none" stroke="#f0f0f0" stroke-width="1.2">
  <path d="M84.3 19.5 V22.4 Q84.3 23 84.9 23 H96.3 Q96.9 23 96.9 22.4 V19.5"/>
 </g>
 <rect x="90" y="14" width="1.5" height="6.5" fill="#f0f0f0"/>
 <path d="M87.4 15.4 L90.75 11.6 L94.1 15.4 Z" fill="#f0f0f0"/>
 <path d="M151.3 12 H158.5 L160.6 14.1 V22.9 H151.3 Z" fill="none" stroke="#eee" stroke-width="0.9"/>
 <text x="152.3" y="19.6" font-size="3.6" font-weight="bold" fill="#bdbdbd" font-family="Liberation Sans" textLength="7" lengthAdjust="spacingAndGlyphs">DXF</text><path d="M158.5 12 V14.1 H160.6" fill="none" stroke="#eee" stroke-width="0.7"/>
 <path d="M219.6 11.6 L221.4 15.7 L225.9 16 L222.5 19 L223.6 23.2 L219.6 20.9 L215.7 23.2 L216.7 19 L213.2 16 L217.8 15.7 Z" fill="#10cc10" stroke="#10cc10" stroke-width="0.8" stroke-linejoin="round"/>
 <!-- button icons -->
 <path d="M150.1 406.1 L158.8 414.1 M158.8 406.1 L150.1 414.1" stroke="#fafafa" stroke-width="3"/>
 <g transform="translate(192.7 403.9)">
  <g fill="none" stroke="#fafafa" stroke-width="2.6">
   <path d="M1.95 6.0 V4.7 Q1.95 3.2 3.45 3.2 H10"/>
   <path d="M10.75 6.6 V8.1 Q10.75 9.6 9.25 9.6 H2.8"/>
  </g>
  <path d="M9.6 0.1 L12.8 3.1 L9.6 6.1 Z M3.2 6.7 L0 9.7 L3.2 12.7 Z" fill="#fafafa"/>
 </g>
 <rect x="240.7" y="404.9" width="3.3" height="11" fill="#fafafa"/>
 <rect x="235.8" y="408.6" width="13.2" height="3.3" fill="#fafafa"/>
</svg>

</body></html>
